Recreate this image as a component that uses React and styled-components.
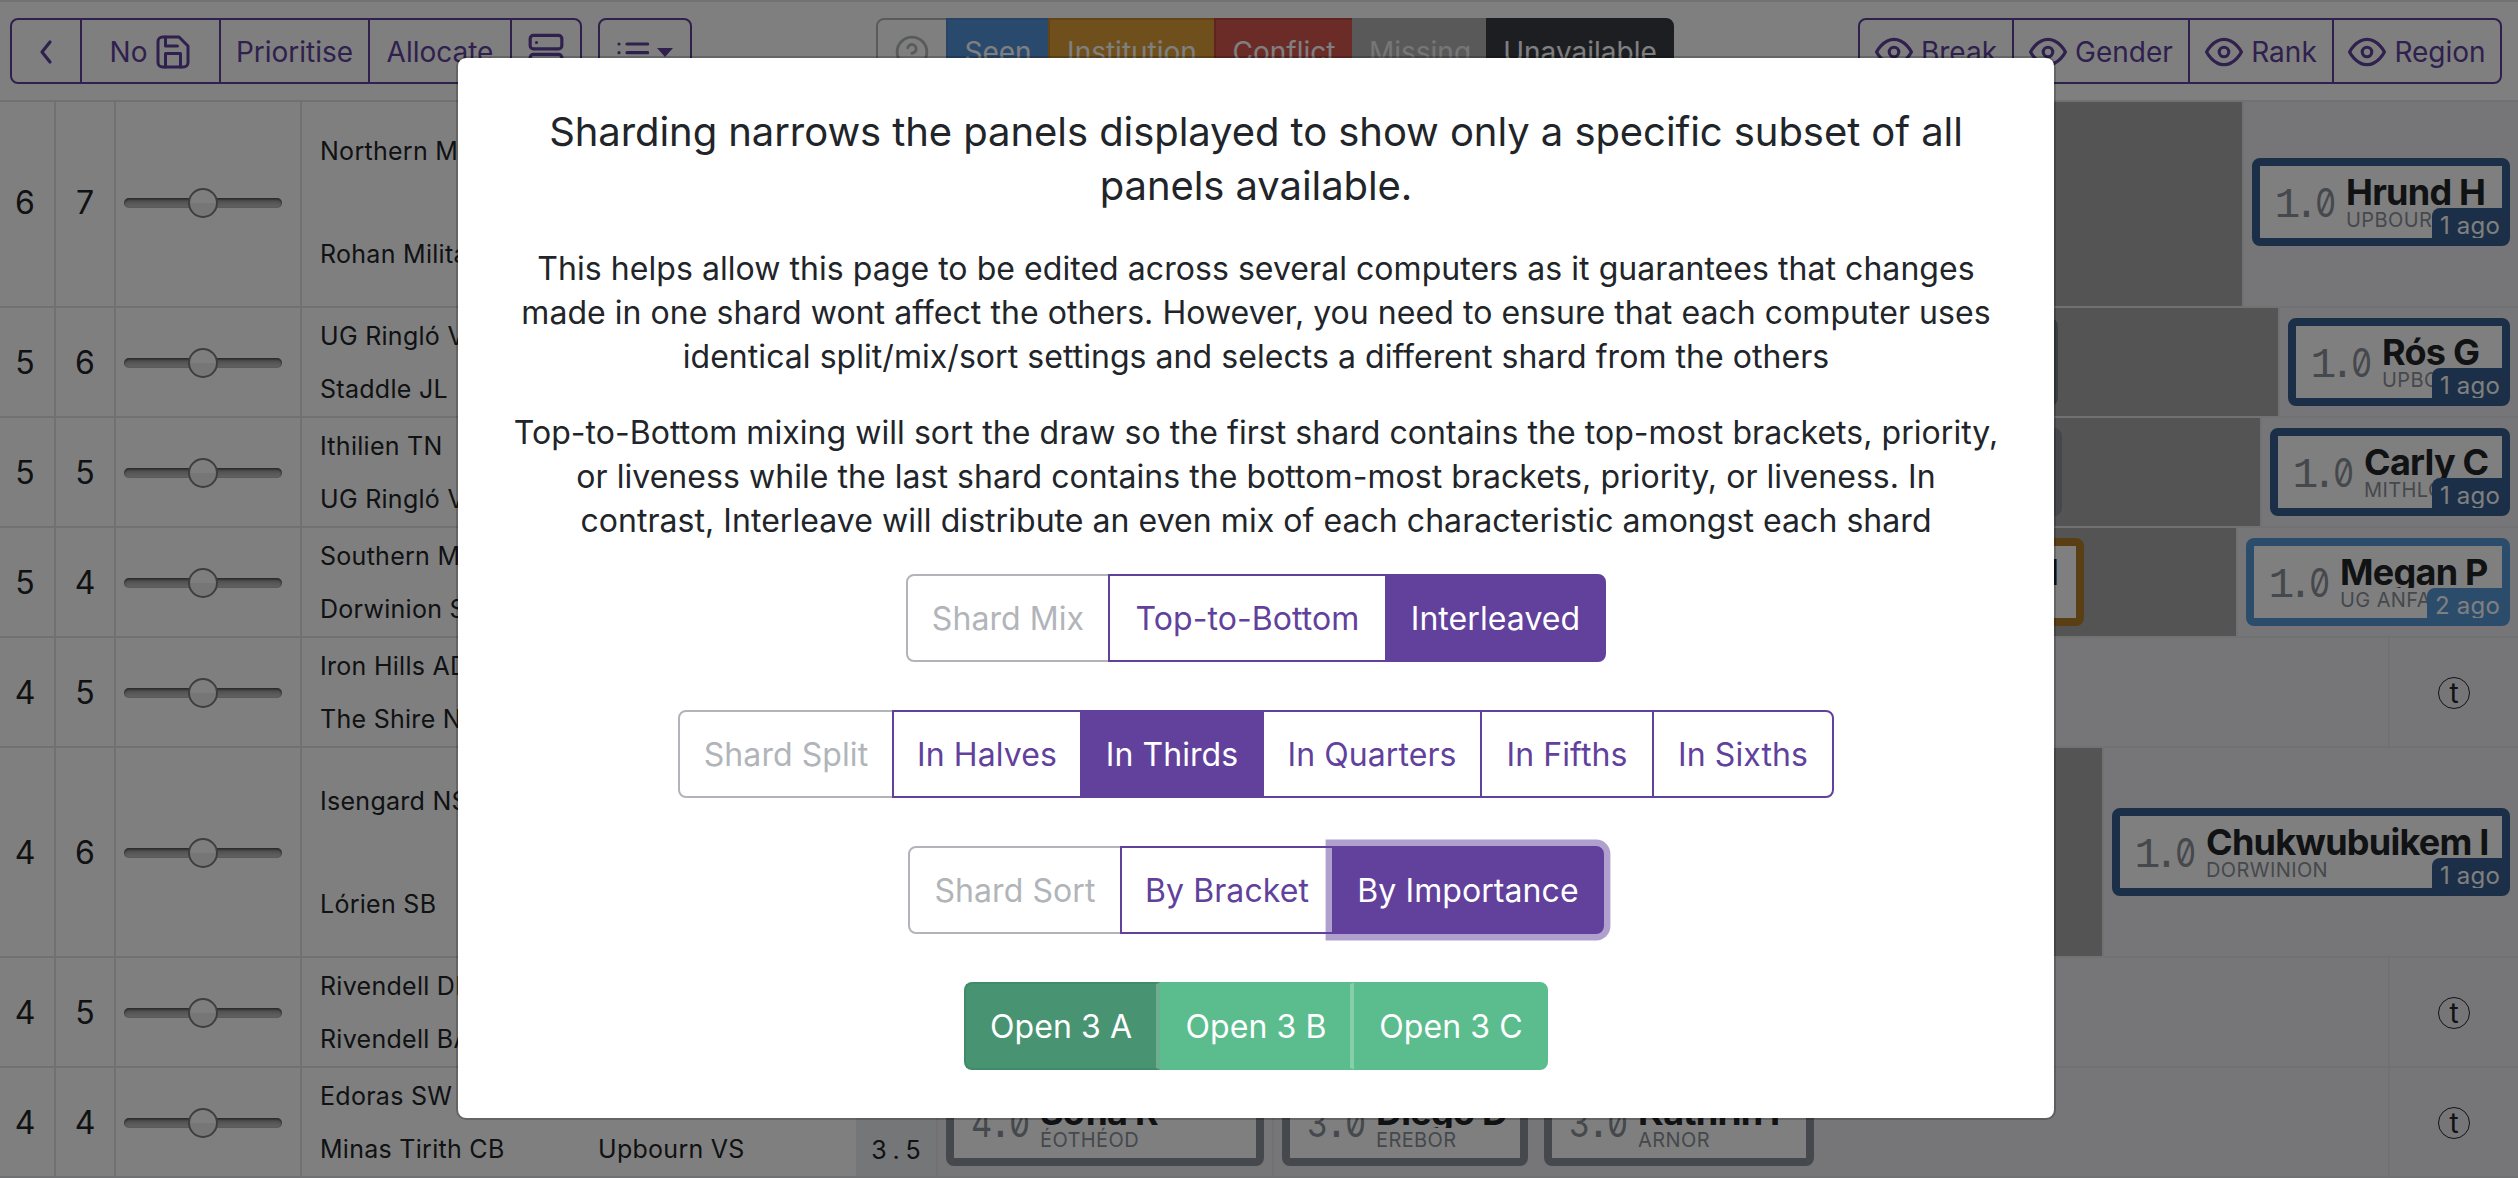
import React from "react";
import styled, { createGlobalStyle, css } from "styled-components";

const ink = "#212529";
const purple = "#61419c";
const line = "#dee2e6";

const Global = createGlobalStyle`
  * { box-sizing: border-box; }
  body { margin: 0; overflow: hidden; }
  #root { height: 1178px; }
`;

const Screen = styled.div`
  position: relative;
  width: 2518px;
  height: 1178px;
  overflow: hidden;
  background: #fff;
  color: ${ink};
  font-family: Inter, "Liberation Sans", sans-serif;
  font-size: 28px;
  line-height: 1.5;
`;

const Header = styled.header`
  position: relative;
  z-index: 1;
  height: 102px;
  padding: 16px 16px 0 10px;
  display: flex;
  justify-content: space-between;
  align-items: flex-start;
  background: #fff;
  border-top: 2px solid #e4e5e8;
  border-bottom: 2px solid ${line};
`;

const Cluster = styled.div`
  display: flex;
  gap: 16px;
  width: ${(p) => p.$w}px;
  justify-content: ${(p) => (p.$end ? "flex-end" : "flex-start")};
`;

const Group = styled.div`
  display: flex;
`;

const tones = {
  outline: css`color: ${purple}; border-color: ${purple}; background: #fff;`,
  solid: css`color: #fff; border-color: ${purple}; background: ${purple};`,
  muted: css`color: #b1b5b9; border-color: #b1b5b9; background: #fff;`,
  seen: css`color: #fff; border-color: #4d88c6; background: #5595da;`,
  institution: css`color: #fff; border-color: #c8892a; background: #df9e38;`,
  conflict: css`color: #fff; border-color: #c04740; background: #d6564e;`,
  missing: css`color: #ededed; border-color: #b2b2b2; background: #b2b2b2;`,
  unavailable: css`color: #fff; border-color: #3a3c44; background: #3a3c44;`,
  open: css`color: #fff; border-color: #5bbd8e; background: #5bbd8e;`,
  opened: css`color: #fff; border-color: #3f8c66; background: #489472;`,
};

const Button = styled.button`
  display: flex;
  align-items: center;
  justify-content: center;
  gap: 8px;
  flex: none;
  width: ${(p) => p.$w}px;
  height: ${(p) => (p.$large ? 88 : 66)}px;
  padding: 2px 0 0;
  margin: 0;
  border: 2px solid;
  font: inherit;
  font-size: ${(p) => (p.$large ? 32 : 28)}px;
  letter-spacing: ${(p) => (p.$large ? 0.08 : 0)}px;
  white-space: nowrap;
  ${(p) => tones[p.$tone || "outline"]}
  & + & { margin-left: -2px; }
  &:first-child { border-top-left-radius: 8px; border-bottom-left-radius: 8px; }
  &:last-child { border-top-right-radius: 8px; border-bottom-right-radius: 8px; }
  ${(p) => p.$focus && css`box-shadow: 0 0 0 6.4px rgba(97, 65, 156, 0.5);`}
  ${(p) => p.$rule && css`border-right: ${p.$rule}px solid ${p.$ruleColor};`}
  svg { flex: none; }
`;

const Rows = styled.main`
  margin-top: -4px;
`;

const Row = styled.div`
  display: flex;
  height: ${(p) => (p.$tall ? 210 : 110)}px;
  border-bottom: 2px solid ${line};
`;

const Cell = styled.div`
  flex: none;
  width: ${(p) => p.$w}px;
  display: flex;
  align-items: center;
  justify-content: center;
  border-right: 2px solid ${line};
  font-size: 32px;
  padding: 2px ${(p) => p.$nudge || 0}px 0 0;
`;

const Track = styled.div`
  position: relative;
  width: 158px;
  height: 10px;
  margin-right: 10px;
  border-radius: 5px;
  background: linear-gradient(#909090, #cacaca);
  box-shadow: inset 0 2px 2px rgba(0, 0, 0, 0.35), inset 0 0 2px rgba(0, 0, 0, 0.3);
`;

const Thumb = styled.div`
  position: absolute;
  left: 64px;
  top: -10px;
  width: 30px;
  height: 30px;
  border: 2px solid #7c7c7c;
  border-radius: 50%;
  background: linear-gradient(#fcfcfc 50%, #ededed 50%);
`;

const Teams = styled.div`
  flex: none;
  width: 554px;
  padding: 2px 0 0 18px;
  display: grid;
  grid-template-columns: 278px 1fr;
  grid-auto-rows: 1fr;
  align-items: center;
  font-size: 25px;
  letter-spacing: 0.28px;
  white-space: nowrap;
`;

const Liveness = styled.div`
  flex: none;
  width: 82px;
  display: flex;
  align-items: flex-end;
  justify-content: center;
  padding: 0 0 7px 0;
  background: #e9ecef;
  border-right: 2px solid ${line};
  font-size: 25px;
  span { width: 17px; text-align: center; }
`;

const Panel = styled.div`
  flex: 1;
  min-width: 0;
  display: flex;
  justify-content: ${(p) => (p.$end ? "flex-end" : "flex-start")};
  align-items: center;
  background: ${(p) => (p.$dark ? "#a9a9a9" : "#ecedf0")};
`;

const Slot = styled.div`
  flex: none;
  width: ${(p) => p.$w}px;
  align-self: stretch;
  display: flex;
  align-items: center;
  gap: 16px;
  padding: 0 8px;
  background: #ecedf0;
  border-left: ${(p) => (p.$plain ? 0 : 2)}px solid ${line};
  justify-content: ${(p) => (p.$center ? "center" : "flex-start")};
`;

const cardColors = { navy: "#365e90", blue: "#5899d8", amber: "#b67e28", slate: "#8b9199", dusk: "#8a8f9a", steel: "#757c84" };

const Card = styled.div`
  position: relative;
  flex: none;
  width: ${(p) => p.$w}px;
  height: 88px;
  margin-right: ${(p) => p.$mr || 0}px;
  padding-left: 18px;
  display: flex;
  align-items: center;
  overflow: hidden;
  border: 8px solid ${(p) => cardColors[p.$tone]};
  border-radius: 8px;
  background: ${(p) => (p.$filled ? cardColors[p.$tone] : "linear-gradient(#fff, #fff) padding-box, " + cardColors[p.$tone])};
`;

const ScoreBox = styled.div`
  display: flex;
  align-items: baseline;
  width: 57px;
  flex: none;
  font-family: "Liberation Mono", monospace;
  font-size: 43px;
  line-height: 50px;
  padding-top: 4px;
  color: #8b9199;
`;

const Digit = styled.span`
  width: 19px;
  flex: none;
  display: flex;
  justify-content: center;
  ${(p) => p.$sans && css`font-family: Inter, sans-serif; font-size: 39px; font-feature-settings: "zero", "tnum"; transform: scaleX(0.84);`}
`;

const Who = styled.div`
  margin-left: 11px;
  flex: 1;
  white-space: nowrap;
`;

const Name = styled.div`
  font-size: 36px;
  font-weight: 650;
  line-height: 38px;
  height: 35px;
  letter-spacing: -0.75px;
  overflow: hidden;
  text-align: ${(p) => (p.$right ? "right" : "left")};
  padding-right: ${(p) => (p.$right ? 18 : 0)}px;
`;

const School = styled.div`
  font-size: 20px;
  line-height: 24px;
  letter-spacing: 0.4px;
  color: #8b9199;
`;

const Ago = styled.div`
  position: absolute;
  right: 0;
  bottom: 0;
  height: 30px;
  padding: 0 2px 0 8px;
  border-top-left-radius: 8px;
  background: ${(p) => cardColors[p.$tone]};
  color: #fff;
  font-size: 24px;
  line-height: 36px;
  overflow: hidden;
  letter-spacing: 0.2px;
`;

const Trainee = styled.span`
  display: flex;
  align-items: center;
  justify-content: center;
  width: 32px;
  height: 32px;
  margin-top: 1px;
  border: 1px solid ${ink};
  border-radius: 50%;
  font-size: 28px;
  line-height: 26px;
`;

const Backdrop = styled.div`
  position: absolute;
  inset: 0;
  z-index: 2;
  background: rgba(0, 0, 0, 0.5);
  padding: 56px 0 0 456px;
`;

const Modal = styled.section`
  width: 1600px;
  height: 1064px;
  padding: 47px 40px 0;
  border: 2px solid rgba(0, 0, 0, 0.2);
  border-radius: 10px;
  background: #fff;
  background-clip: padding-box;
  display: flex;
  flex-direction: column;
  align-items: center;
  text-align: center;
  white-space: nowrap;
`;

const Title = styled.h4`
  margin: 0 0 34px;
  font-size: 40px;
  font-weight: 400;
  line-height: 54px;
  letter-spacing: -0.07px;
`;

const Text = styled.p`
  margin: 0 0 ${(p) => (p.$last ? 31 : 32)}px;
  font-size: 32px;
  line-height: 44px;
  letter-spacing: 0.05px;
`;

const Choices = styled(Group)`
  margin-bottom: 48px;
`;

const Icon = ({ w, h, box, children, sw = 2 }) => (
  <svg width={w} height={h} viewBox={box || "0 0 24 24"} fill="none" stroke="currentColor" strokeWidth={sw} strokeLinecap="round" strokeLinejoin="round">
    {children}
  </svg>
);

const Eye = () => (
  <Icon w={38} h={38}>
    <path d="M1 12s4-8 11-8 11 8 11 8-4 8-11 8-11-8-11-8z" />
    <circle cx="12" cy="12" r="3" />
  </Icon>
);

const Score = ({ value }) => (
  <ScoreBox>
    {value.split("").map((c, i) => (
      <Digit key={i} $sans={c !== "1" && c !== "."}>{c}</Digit>
    ))}
  </ScoreBox>
);

const Adj = ({ w, tone, score, name, school, ago }) => (
  <Card $w={w} $tone={tone}>
    <Score value={score} />
    <Who>
      <Name>{name}</Name>
      <School>{school}</School>
    </Who>
    {ago && <Ago $tone={tone}>{ago}</Ago>}
  </Card>
);

const rows = [
  { a: 6, b: 7, tall: true, teams: ["Northern Mirkwood", "", "Rohan Military", ""], adj: { w: 258, tone: "navy", score: "1.0", name: "Hrund H", school: "UPBOURN", ago: "1 ago" } },
  { a: 5, b: 6, teams: ["UG Ringló Vale", "", "Staddle JL", ""], sliver: { w: 60, mr: 220, tone: "steel" }, adj: { w: 222, tone: "navy", score: "1.0", name: "Rós G", school: "UPBOURN", ago: "1 ago" } },
  { a: 5, b: 5, teams: ["Ithilien TN", "", "UG Ringló Vale", ""], sliver: { w: 60, mr: 198, tone: "dusk" }, adj: { w: 240, tone: "navy", score: "1.0", name: "Carly C", school: "MITHLOND", ago: "1 ago" } },
  { a: 5, b: 4, teams: ["Southern Mirkwood", "", "Dorwinion SB", ""], amber: true, adj: { w: 264, tone: "blue", score: "1.0", name: "Megan P", school: "UG ANFALAS", ago: "2 ago" } },
  { a: 4, b: 5, teams: ["Iron Hills AD", "", "The Shire NB", ""], trainee: true },
  { a: 4, b: 6, tall: true, teams: ["Isengard NS", "", "Lórien SB", ""], adj: { w: 398, tone: "navy", score: "1.0", name: "Chukwubuikem I", school: "DORWINION", ago: "1 ago" } },
  { a: 4, b: 5, teams: ["Rivendell DE", "", "Rivendell BA", ""], trainee: true },
  { a: 4, b: 4, teams: ["Edoras SW", "", "Minas Tirith CB", "Upbourn VS"], trainee: true, full: true },
];

function DebateRow({ r }) {
  return (
    <Row $tall={r.tall}>
      <Cell $w={56} $nudge={4}>{r.a}</Cell>
      <Cell $w={60}>{r.b}</Cell>
      <Cell $w={186}>
        <Track><Thumb /></Track>
      </Cell>
      <Teams>{r.teams.map((t, i) => <span key={i}>{t}</span>)}</Teams>
      <Liveness>{r.full && "3.5".split("").map((c, i) => <span key={i}>{c}</span>)}</Liveness>
      <Panel $dark={!!r.adj} $end={!r.full}>
        {r.full && (
          <>
            <Slot $w={334} $plain>
              <Adj w={318} tone="slate" score="4.0" name="Sofia R" school="ÉOTHÉOD" />
            </Slot>
            <Slot $w={560}>
              <Adj w={246} tone="slate" score="3.0" name="Diego D" school="EREBOR" />
              <Adj w={270} tone="slate" score="3.0" name="Kathrin F" school="ARNOR" />
            </Slot>
          </>
        )}
        {r.sliver && <Card $w={r.sliver.w} $mr={r.sliver.mr} $tone={r.sliver.tone} $filled />}
        {r.amber && (
          <Card $w={120} $mr={152} $tone="amber">
            <Who><Name $right>I</Name><School>&nbsp;</School></Who>
          </Card>
        )}
      </Panel>
      {r.adj && (
        <Slot $w={r.adj.w + 18}>
          <Adj {...r.adj} />
        </Slot>
      )}
      {r.trainee && (
        <Slot $w={130} $center><Trainee>t</Trainee></Slot>
      )}
    </Row>
  );
}

export default function App() {
  return (
    <Screen>
      <Global />
      <Header>
        <Cluster $w={866}>
          <Group>
            <Button $w={72}>
              <Icon w={14} h={26} box="0 0 14 26" sw={3.2}><path d="M11 3 3 13l8 10" /></Icon>
            </Button>
            <Button $w={141}>
              No
              <Icon w={36} h={36}>
                <path d="M19 22H5a3 3 0 0 1-3-3V5a3 3 0 0 1 3-3h11l6 6v11a3 3 0 0 1-3 3z" />
                <path d="M17 22v-9H7v9M7 2v6h8" />
              </Icon>
            </Button>
            <Button $w={151}>Prioritise</Button>
            <Button $w={144}>Allocate</Button>
            <Button $w={72}>
              <Icon w={38} h={38}>
                <rect x="2" y="1.500" width="20" height="8.500" rx="2" />
                <rect x="2" y="13.500" width="20" height="8.500" rx="2" />
                <path d="M6 6h.01M6 18h.01" />
              </Icon>
            </Button>
          </Group>
          <Group>
            <Button $w={94}>
              <Icon w={32} h={32} sw={2.4}>
                <path d="M7.500 6H23M7.500 12.500H23M7.500 19H23M1.500 6h.01M1.500 12.500h.01M1.500 19h.01" />
              </Icon>
              <svg width="16" height="9" viewBox="0 0 16 9"><path d="M0 0h16L8 9z" fill="currentColor" /></svg>
            </Button>
          </Group>
        </Cluster>
        <Group>
          <Button $w={72} $tone="muted">
            <Icon w={34} h={34}>
              <circle cx="12" cy="12" r="10.500" />
              <path d="M9 9a3 3 0 0 1 5.900 1c0 2-3 3-3 3M12 17.500h.01" />
            </Icon>
          </Button>
          <Button $w={104} $tone="seen">Seen</Button>
          <Button $w={168} $tone="institution">Institution</Button>
          <Button $w={140} $tone="conflict">Conflict</Button>
          <Button $w={136} $tone="missing">Missing</Button>
          <Button $w={188} $tone="unavailable">Unavailable</Button>
        </Group>
        <Cluster $w={828} $end>
          <Group>
            <Button $w={156}><Eye />Break</Button>
            <Button $w={178}><Eye />Gender</Button>
            <Button $w={146}><Eye />Rank</Button>
            <Button $w={170}><Eye />Region</Button>
          </Group>
        </Cluster>
      </Header>
      <Rows>
        {rows.map((r, i) => <DebateRow key={i} r={r} />)}
      </Rows>
      <Backdrop>
        <Modal>
          <Title>
            Sharding narrows the panels displayed to show only a specific subset of all<br />
            panels available.
          </Title>
          <Text>
            This helps allow this page to be edited across several computers as it guarantees that changes<br />
            made in one shard wont affect the others. However, you need to ensure that each computer uses<br />
            identical split/mix/sort settings and selects a different shard from the others
          </Text>
          <Text $last>
            Top-to-Bottom mixing will sort the draw so the first shard contains the top-most brackets, priority,<br />
            or liveness while the last shard contains the bottom-most brackets, priority, or liveness. In<br />
            contrast, Interleave will distribute an even mix of each characteristic amongst each shard
          </Text>
          <Choices>
            <Button $large $w={204} $tone="muted">Shard Mix</Button>
            <Button $large $w={279}>Top-to-Bottom</Button>
            <Button $large $w={221} $tone="solid">Interleaved</Button>
          </Choices>
          <Choices>
            <Button $large $w={216} $tone="muted">Shard Split</Button>
            <Button $large $w={190}>In Halves</Button>
            <Button $large $w={184} $tone="solid">In Thirds</Button>
            <Button $large $w={220}>In Quarters</Button>
            <Button $large $w={174}>In Fifths</Button>
            <Button $large $w={182}>In Sixths</Button>
          </Choices>
          <Choices>
            <Button $large $w={214} $tone="muted">Shard Sort</Button>
            <Button $large $w={214}>By Bracket</Button>
            <Button $large $w={272} $tone="solid" $focus>By Importance</Button>
          </Choices>
          <Group>
            <Button $large $w={198} $tone="opened" $rule={6} $ruleColor="#6fad90">Open 3 A</Button>
            <Button $large $w={196} $tone="open" $rule={6} $ruleColor="#85cfab">Open 3 B</Button>
            <Button $large $w={194} $tone="open">Open 3 C</Button>
          </Group>
        </Modal>
      </Backdrop>
    </Screen>
  );
}
